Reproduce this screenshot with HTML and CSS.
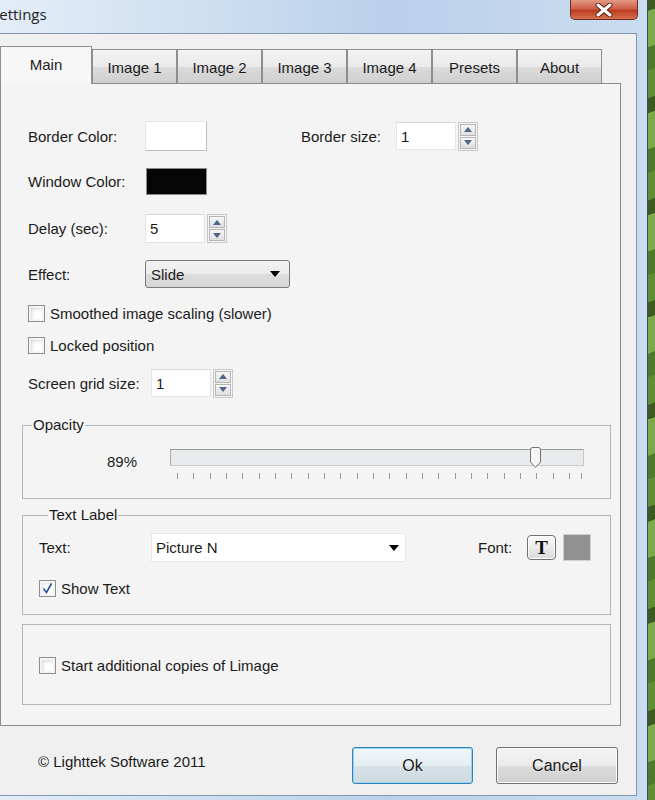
FILE: index.html
```html
<!DOCTYPE html>
<html lang="en">
<head>
  <meta charset="UTF-8" />
  <title>Settings</title>
  <link rel="stylesheet" href="styles.css">
</head>
<body>

<div class="window">
  <div class="titlebar">
    <span class="title">Settings</span>
    <div class="close">
      <svg width="20" height="14" viewBox="0 0 20 14">
        <path d="M4 2 L16 12 M16 2 L4 12" stroke="#5a2318" stroke-width="5" stroke-linecap="round"/>
        <path d="M4 2 L16 12 M16 2 L4 12" stroke="#fff" stroke-width="3" stroke-linecap="round"/>
      </svg>
    </div>
  </div>

  <div class="client">
    <div class="tabs">
      <div class="tab active">Main</div>
      <div class="tab">Image 1</div>
      <div class="tab">Image 2</div>
      <div class="tab">Image 3</div>
      <div class="tab">Image 4</div>
      <div class="tab">Presets</div>
      <div class="tab">About</div>
    </div>

    <div class="panel">
      <!-- colours and border size -->
      <div class="row row-1">
        <span class="lbl">Border Color:</span>
        <span class="swatch swatch-white"></span>
        <span class="lbl lbl-size">Border size:</span>
        <span class="input">1</span>
        <span class="spin">
          <span class="spin-btn"><svg width="8" height="5"><path d="M0 5 L4 0 L8 5Z" fill="#4f6387"/></svg></span>
          <span class="spin-btn"><svg width="8" height="5"><path d="M0 0 L4 5 L8 0Z" fill="#4f6387"/></svg></span>
        </span>
      </div>

      <div class="row row-2">
        <span class="lbl">Window Color:</span>
        <span class="swatch swatch-black"></span>
      </div>

      <div class="row row-3">
        <span class="lbl">Delay (sec):</span>
        <span class="input">5</span>
        <span class="spin">
          <span class="spin-btn"><svg width="8" height="5"><path d="M0 5 L4 0 L8 5Z" fill="#4f6387"/></svg></span>
          <span class="spin-btn"><svg width="8" height="5"><path d="M0 0 L4 5 L8 0Z" fill="#4f6387"/></svg></span>
        </span>
      </div>

      <div class="row row-4">
        <span class="lbl">Effect:</span>
        <span class="select">
          <span>Slide</span>
          <svg width="10" height="6"><path d="M0 0 L10 0 L5 6Z" fill="#000"/></svg>
        </span>
      </div>

      <div class="row row-check row-5">
        <span class="check"></span>
        <span>Smoothed image scaling (slower)</span>
      </div>

      <div class="row row-check row-6">
        <span class="check"></span>
        <span>Locked position</span>
      </div>

      <div class="row row-7">
        <span class="lbl lbl-grid">Screen grid size:</span>
        <span class="input">1</span>
        <span class="spin">
          <span class="spin-btn"><svg width="8" height="5"><path d="M0 5 L4 0 L8 5Z" fill="#4f6387"/></svg></span>
          <span class="spin-btn"><svg width="8" height="5"><path d="M0 0 L4 5 L8 0Z" fill="#4f6387"/></svg></span>
        </span>
      </div>

      <fieldset class="group group-opacity">
        <legend>Opacity</legend>
        <div class="opacity-row">
          <span class="pct">89%</span>
          <div class="slider">
            <div class="track"></div>
            <div class="thumb">
              <svg width="11" height="21" viewBox="0 0 11 21">
                <path d="M0.5 2.5 Q0.5 0.5 2.5 0.5 L8.5 0.5 Q10.5 0.5 10.5 2.5 L10.5 15 L5.5 20.5 L0.5 15 Z" fill="#f4f4f4" stroke="#707070"/>
                <path d="M2 3 L2 14.5 L5.5 18.5" fill="none" stroke="#fff"/>
              </svg>
            </div>
            <div class="ticks"></div>
          </div>
        </div>
      </fieldset>

      <fieldset class="group group-text">
        <legend>Text Label</legend>
        <div class="text-row">
          <span class="lbl lbl-text">Text:</span>
          <span class="combo">
            <span>Picture N</span>
            <svg width="10" height="6"><path d="M0 0 L10 0 L5 6Z" fill="#000"/></svg>
          </span>
          <span class="lbl-font">Font:</span>
          <span class="font-btn">T</span>
          <span class="swatch swatch-grey"></span>
        </div>
        <div class="row-check show-text">
          <span class="check checked">
            <svg width="11" height="11" viewBox="0 0 11 11"><path d="M1.5 5.5 L4.5 9.5 L9.5 0.5" fill="none" stroke="#2d5199" stroke-width="1.6"/></svg>
          </span>
          <span>Show Text</span>
        </div>
      </fieldset>

      <fieldset class="group group-copies">
        <div class="row-check">
          <span class="check"></span>
          <span>Start additional copies of Limage</span>
        </div>
      </fieldset>
    </div>

    <div class="footer">
      <span class="copyright">© Lighttek Software 2011</span>
      <button class="btn btn-default">Ok</button>
      <button class="btn">Cancel</button>
    </div>
  </div>
</div>

</body>
</html>
```

FILE: styles.css
```css
body {
  margin: 0;
  width: 655px;
  height: 800px;
  overflow: hidden;
  font-family: "Liberation Sans", Arial, sans-serif;
  font-size: 15px;
  color: #1b1b1b;
  background: repeating-linear-gradient(160deg, #5f8f35 0 26px, #3c5a22 26px 40px, #7ca94b 40px 74px, #4d7a2b 74px 96px);
}

.window {
  width: 647px;
  height: 800px;
  display: flex;
  flex-direction: column;
  border-right: 1px solid #3d4b5a;
  background: linear-gradient(to right, #e3edf7 0%, #cfe0f1 30%, #b9d1ea 60%, #c4d8ee 85%, #cadcef 100%);
}

/* title bar */
.titlebar {
  height: 33px;
  display: flex;
  align-items: flex-start;
}

.title {
  margin-left: -9px;
  margin-top: 4px;
  font-family: "Open Sans", sans-serif;
  font-size: 15px;
  color: #1e1e1e;
}

.close {
  margin-left: auto;
  margin-right: 9px;
  width: 66px;
  height: 19px;
  display: flex;
  align-items: center;
  justify-content: center;
  border: 1px solid #6d2e22;
  border-top: none;
  border-radius: 0 0 5px 5px;
  background: linear-gradient(to bottom, #e29a84 0%, #d0604a 45%, #bd3d22 55%, #d6714f 100%);
}

/* dialog body */
.client {
  width: 636px;
  height: 761px;
  margin-right: 10px;
  border-top: 1px solid #8496ab;
  border-right: 1px solid #8496ab;
  border-bottom: 1px solid #8496ab;
  background: #f0f0f0;
}

.tabs {
  display: flex;
  align-items: flex-end;
  padding-top: 12px;
}

.tab {
  box-sizing: border-box;
  width: 85px;
  height: 34px;
  display: flex;
  align-items: center;
  justify-content: center;
  padding-top: 2px;
  border: 1px solid #8c8e94;
  border-bottom: none;
  background: linear-gradient(to bottom, #f3f3f3 0%, #ebebeb 50%, #dcdcdc 51%, #cfcfcf 100%);
}

.tab.active {
  width: 92px;
  height: 38px;
  margin-bottom: -1px;
  padding-top: 0;
  padding-bottom: 2px;
  position: relative;
  z-index: 1;
  background: #f7f7f7;
}

.panel {
  box-sizing: border-box;
  width: 621px;
  height: 643px;
  padding: 37px 9px 0 21px;
  border: 1px solid #898c95;
  background: #f4f4f4;
}

.row {
  display: flex;
  align-items: center;
  margin-left: 6px;
}

.lbl {
  width: 117px;
  flex-shrink: 0;
}

.row-1 { height: 30px; }
.row-2 { height: 27px; margin-top: 17px; }
.row-3 { height: 29px; margin-top: 19px; }
.row-4 { height: 28px; margin-top: 17px; }
.row-5 { margin-top: 17px; }
.row-6 { margin-top: 15px; }
.row-7 { height: 28px; margin-top: 15px; }

.lbl-size {
  width: 95px;
  margin-left: 94px;
}

.lbl-grid {
  width: 123px;
}

.swatch {
  box-sizing: border-box;
  display: inline-block;
}

.swatch-white {
  width: 62px;
  height: 30px;
  background: #fff;
  border: 1px solid #e6e6e6;
  border-right-color: #bdbdbd;
  border-bottom-color: #bdbdbd;
}

.swatch-black {
  width: 61px;
  height: 27px;
  margin-left: 1px;
  background: #050505;
  border: 1px solid #8a8a8a;
}

.swatch-grey {
  width: 28px;
  height: 27px;
  margin-left: 7px;
  background: #919191;
  border: 1px solid #d0d0d0;
}

.input {
  box-sizing: border-box;
  width: 60px;
  height: 28px;
  padding-left: 4px;
  display: flex;
  align-items: center;
  background: #fff;
  border: 1px solid #e2e6ea;
  border-top-color: #d3d6da;
}

.row-3 .input { height: 29px; }

.spin {
  box-sizing: border-box;
  width: 20px;
  height: 29px;
  margin-left: 2px;
  display: flex;
  flex-direction: column;
  gap: 1px;
  padding: 1px;
  border: 1px solid #c9c9c9;
}

.spin-btn {
  flex: 1;
  display: flex;
  align-items: center;
  justify-content: center;
  border: 1px solid #b6b6b6;
  background: linear-gradient(to bottom, #f6f6f6, #dedede);
}

.select {
  box-sizing: border-box;
  width: 145px;
  height: 28px;
  display: flex;
  align-items: center;
  justify-content: space-between;
  padding: 0 9px 0 5px;
  border: 1px solid #7a7a7a;
  border-radius: 3px;
  background: linear-gradient(to bottom, #f3f3f3 0%, #ebebeb 50%, #dddddd 51%, #d6d6d6 100%);
}

.row-check {
  display: flex;
  align-items: center;
  gap: 5px;
}

.check {
  box-sizing: border-box;
  width: 17px;
  height: 17px;
  display: flex;
  align-items: center;
  justify-content: center;
  border: 1px solid #8f8f8f;
  background: #fff;
  box-shadow: inset 0 0 0 2px #f4f4f4, inset 2px 2px 4px #bdbdbd;
}

.check.checked {
  box-shadow: inset 0 0 0 2px #f4f4f4, inset 2px 2px 4px #c8d4e4;
}

/* group boxes */
.group {
  box-sizing: border-box;
  width: 589px;
  margin: 0;
  padding: 0;
  border: 1px solid #b5b5b5;
}

.group legend {
  margin-left: 9px;
  padding: 0 1px;
  line-height: 16px;
}

.group-opacity {
  margin-top: 20px;
}

.opacity-row {
  display: flex;
  padding: 16px 0 19px;
}

.pct {
  width: 114px;
  text-align: right;
  line-height: 20px;
  margin-top: 3px;
}

.slider {
  margin-left: 33px;
  width: 414px;
  position: relative;
}

.track {
  box-sizing: border-box;
  height: 17px;
  background: #e8ebeb;
  border: 1px solid #c9c9c9;
  border-top-color: #9c9c9c;
  border-left-color: #a8a8a8;
}

.thumb {
  position: absolute;
  left: 360px;
  top: -2px;
  height: 21px;
}

.thumb svg {
  display: block;
}

.ticks {
  width: 404px;
  height: 6px;
  margin: 7px 0 0 7px;
  border-right: 1px solid #9a9a9a;
  background: repeating-linear-gradient(to right, #9a9a9a 0 1px, transparent 1px 16.33px);
}

.group-text {
  margin-top: 8px;
  padding: 10px 0 17px 16px;
}

.text-row {
  display: flex;
  align-items: center;
}

.lbl-text {
  width: 112px;
}

.combo {
  box-sizing: border-box;
  width: 255px;
  height: 29px;
  display: flex;
  align-items: center;
  justify-content: space-between;
  padding: 0 6px 0 4px;
  background: #fff;
  border: 1px solid #e6e8eb;
}

.lbl-font {
  margin-left: 72px;
  width: 49px;
}

.font-btn {
  box-sizing: border-box;
  width: 29px;
  height: 25px;
  display: flex;
  align-items: center;
  justify-content: center;
  border: 1px solid #707070;
  border-radius: 4px;
  background: linear-gradient(to bottom, #fafafa 0%, #ececec 50%, #d8d8d8 100%);
  box-shadow: inset 0 0 0 1px #fff;
  font-family: "Liberation Serif", serif;
  font-weight: bold;
  font-size: 19px;
  color: #111;
}

.show-text {
  margin-top: 18px;
}

.group-copies {
  height: 81px;
  margin-top: 9px;
  padding: 32px 0 0 16px;
}

/* bottom bar */
.footer {
  height: 68px;
  display: flex;
  align-items: flex-start;
  padding: 21px 18px 0 38px;
  box-sizing: border-box;
}

.copyright {
  margin-top: 6px;
}

.btn {
  box-sizing: border-box;
  width: 122px;
  height: 37px;
  margin-left: 23px;
  font-family: "Liberation Sans", Arial, sans-serif;
  font-size: 16px;
  color: #1b1b1b;
  border: 1px solid #707070;
  border-radius: 3px;
  background: linear-gradient(to bottom, #f4f4f4 0%, #ebebeb 50%, #dddddd 51%, #cfcfcf 100%);
  box-shadow: inset 0 0 0 1px #fcfcfc;
}

.btn-default {
  width: 121px;
  margin-left: auto;
  border-color: #3c7fb1;
  box-shadow: inset 0 0 0 1px #8fd6fb;
  background: linear-gradient(to bottom, #f1f6f9 0%, #e6eef3 50%, #d7e2e8 51%, #cfdae1 100%);
}
```
